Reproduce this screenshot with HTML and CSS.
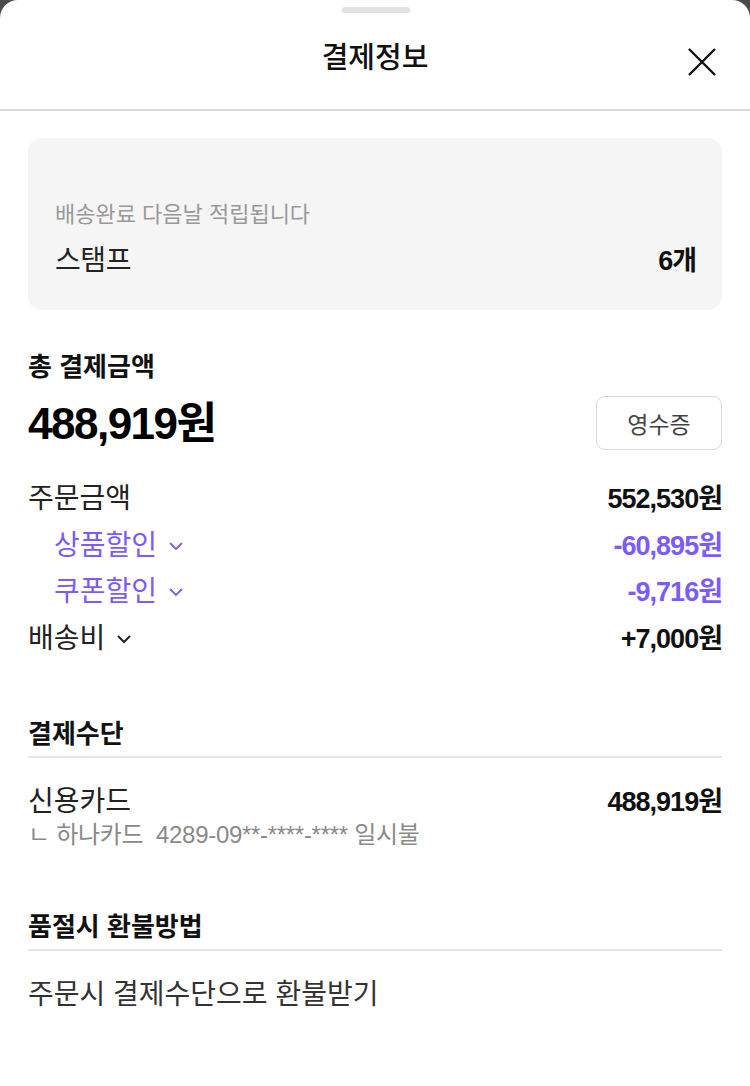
FILE: index.html
```html
<!DOCTYPE html>
<html lang="ko">
<head>
<meta charset="utf-8">
<title>결제정보</title>
<link rel="stylesheet" href="styles.css">
</head>
<body>
<div class="sheet">
  <div class="handle"></div>
  <header class="header">
    <h1 class="title">결제정보</h1>
    <button class="close" aria-label="닫기">
      <svg width="30" height="30" viewBox="0 0 30 30"><path d="M2 2 L28 28 M28 2 L2 28" stroke="#111" stroke-width="2.4" fill="none"/></svg>
    </button>
  </header>
  <main class="content">
    <section class="stamp-card">
      <p class="stamp-note">배송완료 다음날 적립됩니다</p>
      <div class="row stamp-row">
        <span class="stamp-label">스탬프</span>
        <span class="num">6개</span>
      </div>
    </section>

    <section class="total">
      <h2 class="sec-title">총 결제금액</h2>
      <div class="total-row">
        <span class="total-amount">488,919원</span>
        <button class="receipt">영수증</button>
      </div>
    </section>

    <section class="breakdown">
      <div class="row line">
        <span class="label">주문금액</span>
        <span class="num">552,530원</span>
      </div>
      <div class="row line sub">
        <span class="label purple">상품할인<svg class="chev" width="16" height="10" viewBox="0 0 16 10"><path d="M2 2 L8 8 L14 2" stroke="#7b5cfa" stroke-width="1.8" fill="none"/></svg></span>
        <span class="num purple">-60,895원</span>
      </div>
      <div class="row line sub">
        <span class="label purple">쿠폰할인<svg class="chev" width="16" height="10" viewBox="0 0 16 10"><path d="M2 2 L8 8 L14 2" stroke="#7b5cfa" stroke-width="1.8" fill="none"/></svg></span>
        <span class="num purple">-9,716원</span>
      </div>
      <div class="row line">
        <span class="label">배송비<svg class="chev" width="16" height="10" viewBox="0 0 16 10"><path d="M2 2 L8 8 L14 2" stroke="#222" stroke-width="2" fill="none"/></svg></span>
        <span class="num">+7,000원</span>
      </div>
    </section>

    <section class="block">
      <h2 class="sec-title divided">결제수단</h2>
      <div class="row line">
        <span class="label">신용카드</span>
        <span class="num">488,919원</span>
      </div>
      <p class="card-detail">ㄴ 하나카드&nbsp; 4289-09**-****-**** 일시불</p>
    </section>

    <section class="block">
      <h2 class="sec-title divided">품절시 환불방법</h2>
      <p class="refund">주문시 결제수단으로 환불받기</p>
    </section>
  </main>
</div>
</body>
</html>
```

FILE: styles.css
```css
* { box-sizing: border-box; }
html, body { margin: 0; padding: 0; }
body {
  background: #4a4a4a;
  font-family: "Liberation Sans", "Noto Sans CJK KR", sans-serif;
  color: #222;
  width: 750px;
  height: 1086px;
  overflow: hidden;
}
.sheet {
  background: #fff;
  border-radius: 18px 18px 0 0;
  height: 1086px;
  position: relative;
}
.handle {
  position: absolute;
  top: 7px;
  left: 342px;
  width: 68px;
  height: 6px;
  border-radius: 3px;
  background: #e2e2e2;
}
.header {
  height: 111px;
  border-bottom: 2px solid #dcdcdc;
  display: flex;
  align-items: center;
  justify-content: center;
  position: relative;
}
.title {
  margin: 0;
  font-size: 29px;
  font-weight: 500;
  color: #111;
  line-height: 40px;
  padding-top: 6px;
}
.close {
  position: absolute;
  right: 33px;
  top: 47px;
  width: 30px;
  height: 30px;
  padding: 0;
  border: 0;
  background: none;
  display: flex;
}
.content {
  padding: 27px 28px 0;
}
.stamp-card {
  background: #f5f5f5;
  border-radius: 14px;
  height: 172px;
  padding: 62px 26px 0 27px;
}
.stamp-note {
  margin: 0;
  font-size: 22px;
  color: #999;
  line-height: 30px;
}
.row {
  display: flex;
  justify-content: space-between;
  align-items: center;
}
.stamp-row { margin-top: 14px; height: 34px; }
.stamp-label {
  font-size: 28px;
  color: #222;
  letter-spacing: -0.4px;
  line-height: 34px;
}
.num {
  font-size: 27px;
  font-weight: 700;
  letter-spacing: -1px;
  color: #111;
  line-height: 34px;
}
.total { margin-top: 42px; }
.sec-title {
  margin: 0;
  font-size: 26px;
  font-weight: 700;
  color: #111;
  line-height: 30px;
}
.total-row {
  margin-top: 15px;
  height: 54px;
  display: flex;
  justify-content: space-between;
  align-items: center;
}
.total-amount {
  font-size: 44px;
  font-weight: 700;
  letter-spacing: -1.5px;
  color: #000;
  line-height: 54px;
}
.receipt {
  align-self: flex-start;
  width: 126px;
  height: 54px;
  margin-top: -1px;
  border: 1.5px solid #d8d8d8;
  border-radius: 9px;
  background: #fff;
  font-family: inherit;
  font-size: 23px;
  color: #444;
}
.breakdown {
  margin-top: 31px;
  display: flex;
  flex-direction: column;
  gap: 12.67px;
}
.line { height: 34px; }
.label {
  font-size: 28px;
  color: #222;
  display: flex;
  align-items: center;
  gap: 11px;
  line-height: 34px;
}
.sub { padding-left: 26px; }
.purple { color: #7b5cfa; }
.num.purple { color: #7b5cfa; }
.block { margin-top: 63px; }
.block + .block { margin-top: 62px; }
.sec-title.divided {
  margin-top: 2px;
  padding-bottom: 7px;
  border-bottom: 2px solid #e6e6e6;
}
.block .line { margin-top: 27px; }
.card-detail {
  margin: 1px 0 0;
  font-size: 24px;
  color: #8a8a8a;
  letter-spacing: -0.3px;
  line-height: 30px;
}
.refund {
  margin: 27px 0 0;
  font-size: 28px;
  color: #333;
  line-height: 34px;
}
```
